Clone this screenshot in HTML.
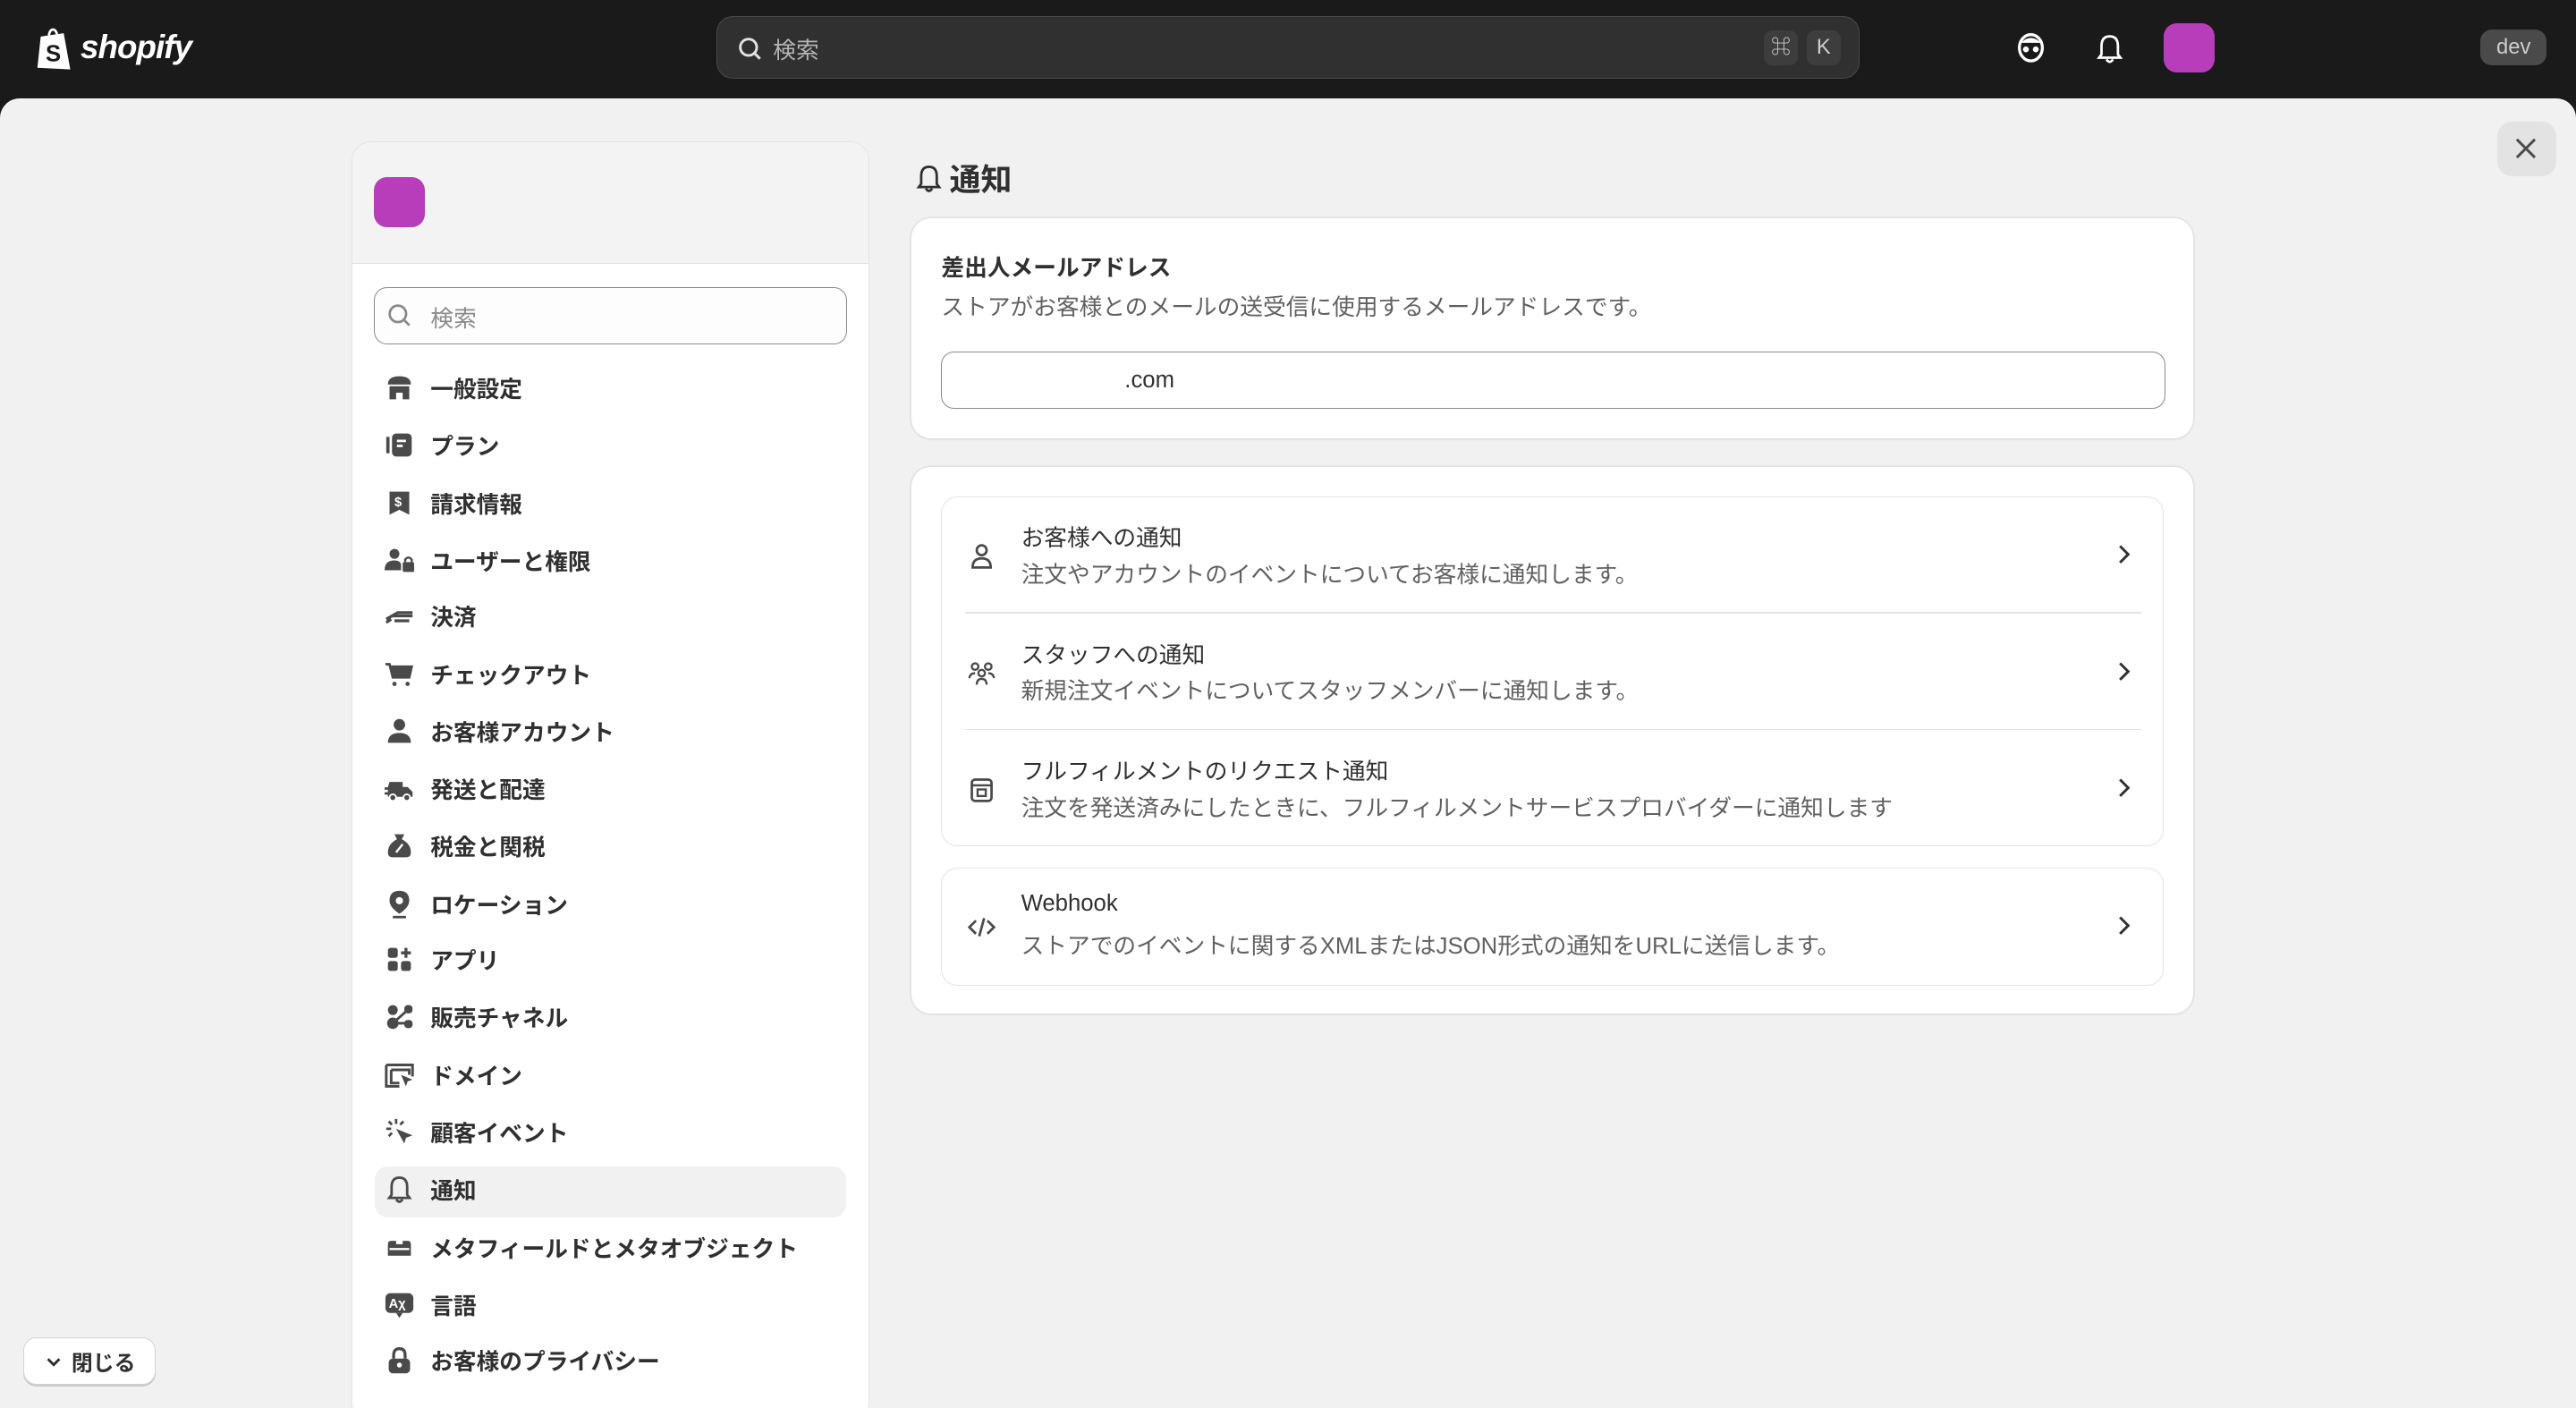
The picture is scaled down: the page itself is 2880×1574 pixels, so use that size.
<!DOCTYPE html>
<html><head><meta charset="utf-8">
<style>
html{zoom:1.83673;height:857px;overflow:hidden}
*{box-sizing:border-box;margin:0;padding:0}
body{width:1568px;height:857px;overflow:hidden;background:#1a1a1a;font-family:"Liberation Sans","Noto Sans CJK JP",sans-serif;color:#303030;position:relative}
.abs{position:absolute}
.main{position:absolute;left:0;top:60px;width:1568px;height:797px;background:#f1f1f1;border-radius:12px 12px 0 0}
.side{position:absolute;left:214px;top:86px;width:315px;height:780px;background:#fff;border:1px solid #e3e3e3;border-radius:12px;overflow:hidden}
.side .hd{height:74px;background:#f3f3f3;border-bottom:1px solid #e3e3e3}
.nav{position:absolute;left:13px;width:287px;height:30px;display:flex;align-items:center;font-size:14px;font-weight:bold;color:#303030}
.nav svg{width:18px;height:18px;margin-left:6px;margin-right:10px}
.card{position:absolute;left:555px;width:780px;background:#fff;border-radius:12px;box-shadow:0 0 0 1px #e3e3e3,0 1px 1px rgba(0,0,0,.06)}
.box{position:absolute;left:18px;width:744px;border:1px solid #e3e3e3;border-radius:10px}
.row{position:absolute;left:0;width:742px;height:71px}
.row .t{position:absolute;left:48px;top:14px;font-size:14px;color:#303030}
.row .d{position:absolute;left:48px;top:36px;font-size:14px;color:#616161}
.row svg.i{position:absolute;left:15px;top:27px;width:18px;height:18px}
.row .c{position:absolute;left:712px;top:27px;width:14px;height:16px}
.sep{position:absolute;left:14px;width:716px;height:1px;background:#e3e3e3}
</style></head><body>
<!-- header -->
<div class="abs" style="left:22px;top:15px;display:flex;align-items:center;color:#fff">
<svg width="24" height="28" viewBox="0 0 24 28"><path d="M3 7 L17 5 L21 27 L1 26 Z" fill="#fff"/><path d="M8 7 C8 2 12 1 13 6" stroke="#fff" stroke-width="1.5" fill="none"/><text x="6" y="22" font-size="14" font-weight="bold" fill="#1a1a1a" font-family="Liberation Sans">S</text></svg>
<span style="font-size:20px;font-weight:bold;font-style:italic;margin-left:3px;letter-spacing:-0.5px">shopify</span></div>
<div class="abs" style="left:436px;top:10px;width:696px;height:38px;background:#303030;border:1px solid #4a4a4a;border-radius:10px">
<svg class="abs" style="left:12px;top:11px" width="16" height="16" viewBox="0 0 16 16"><circle cx="7" cy="7" r="5" stroke="#e3e3e3" stroke-width="1.6" fill="none"/><path d="M11 11 L14 14" stroke="#e3e3e3" stroke-width="1.6"/></svg>
<span class="abs" style="left:34px;top:9px;font-size:14px;color:#b5b5b5">検索</span>
<span class="abs" style="left:637px;top:8px;width:21px;height:21px;background:#3d3d3d;border-radius:5px;color:#ccc;font-size:12px;text-align:center;line-height:21px">⌘</span>
<span class="abs" style="left:663px;top:8px;width:21px;height:21px;background:#3d3d3d;border-radius:5px;color:#ccc;font-size:13px;text-align:center;line-height:21px">K</span>
</div>
<svg class="abs" style="left:1227px;top:19px" width="18" height="20" viewBox="0 0 18 20"><ellipse cx="9" cy="10" rx="7" ry="8" fill="none" stroke="#fff" stroke-width="1.8"/><path d="M3 7 Q9 1 15 7 Z" fill="#fff"/><circle cx="6" cy="11" r="1.8" fill="#fff"/><circle cx="12" cy="11" r="1.8" fill="#fff"/></svg>
<svg class="abs" style="left:1276px;top:20px" width="16" height="19" viewBox="0 0 16 19"><path d="M3 13 L3 8 Q3 2 8 2 Q13 2 13 8 L13 13 L14.5 15 L1.5 15 Z M6 16 Q8 19 10 16" fill="none" stroke="#fff" stroke-width="1.5"/></svg>
<div class="abs" style="left:1317px;top:14px;width:31px;height:30px;background:#b83dba;border-radius:8px"></div>
<div class="abs" style="left:1510px;top:18px;width:40px;height:22px;background:#4a4a4a;border-radius:7px;color:#ccc;font-size:13px;text-align:center;line-height:22px">dev</div>

<div class="main"></div>
<div class="abs" style="left:1520px;top:74px;width:36px;height:33px;background:#e3e3e3;border-radius:9px"><svg class="abs" style="left:11px;top:10px" width="13" height="13" viewBox="0 0 13 13"><path d="M1 1 L12 12 M12 1 L1 12" stroke="#4a4a4a" stroke-width="1.6"/></svg></div>

<!-- sidebar -->
<div class="side"><div class="hd"><div class="abs" style="left:13px;top:21px;width:31px;height:31px;background:#b83dba;border-radius:8px"></div></div>
<div class="abs" style="left:13px;top:88px;width:288px;height:35px;border:1px solid #8a8a8a;border-radius:8px;background:#fdfdfd">
<svg class="abs" style="left:7px;top:9px" width="16" height="16" viewBox="0 0 16 16"><circle cx="7" cy="7" r="5" stroke="#8a8a8a" stroke-width="1.5" fill="none"/><path d="M11 11 L14 14" stroke="#8a8a8a" stroke-width="1.5"/></svg>
<span class="abs" style="left:34px;top:8px;font-size:14px;color:#8a8a8a">検索</span></div>
</div>
<div class="abs" style="left:228px;top:710px;width:287px;height:31px;background:#f1f1f1;border-radius:8px"></div>

<!-- content -->
<div class="abs" style="left:557px;top:95px;display:flex;align-items:center;font-size:19px;font-weight:bold;color:#303030">
<svg width="17" height="18" viewBox="0 0 16 19" style="margin-right:4px"><path d="M3 13 L3 8 Q3 2 8 2 Q13 2 13 8 L13 13 L14.5 15 L1.5 15 Z M6 16 Q8 19 10 16" fill="none" stroke="#303030" stroke-width="1.6"/></svg>通知</div>

<div class="card" style="top:133px;height:134px">
<div class="abs" style="left:18px;top:19px;font-size:14px;font-weight:bold">差出人メールアドレス</div>
<div class="abs" style="left:18px;top:43px;font-size:14px;color:#616161">ストアがお客様とのメールの送受信に使用するメールアドレスです。</div>
<div class="abs" style="left:18px;top:81px;width:745px;height:35px;border:1px solid #8a8a8a;border-radius:8px"><span class="abs" style="left:111px;top:9px;font-size:14px">.com</span></div>
</div>

<div class="card" style="top:284px;height:333px">
<div class="box" style="top:18px;height:213px">
<div class="row" style="top:0"><svg class="i" viewBox="0 0 18 18"><circle cx="9" cy="5.5" r="3" fill="none" stroke="#4a4a4a" stroke-width="1.5"/><path d="M3.5 16 Q3.5 10.5 9 10.5 Q14.5 10.5 14.5 16 Z" fill="none" stroke="#4a4a4a" stroke-width="1.5"/></svg><div class="t">お客様への通知</div><div class="d">注文やアカウントのイベントについてお客様に通知します。</div><svg class="c" viewBox="0 0 14 16"><path d="M5 3 L10 8 L5 13" fill="none" stroke="#303030" stroke-width="1.6"/></svg></div>
<div class="sep" style="top:70px"></div>
<div class="row" style="top:71px"><svg class="i" viewBox="0 0 18 18"><circle cx="5" cy="5" r="2" fill="none" stroke="#4a4a4a" stroke-width="1.3"/><circle cx="13" cy="5" r="2" fill="none" stroke="#4a4a4a" stroke-width="1.3"/><circle cx="9" cy="9" r="2" fill="none" stroke="#4a4a4a" stroke-width="1.3"/><path d="M1.5 12 Q2 9 5 9 M16.5 12 Q16 9 13 9 M6 16 Q6 12.5 9 12.5 Q12 12.5 12 16" fill="none" stroke="#4a4a4a" stroke-width="1.3"/></svg><div class="t">スタッフへの通知</div><div class="d">新規注文イベントについてスタッフメンバーに通知します。</div><svg class="c" viewBox="0 0 14 16"><path d="M5 3 L10 8 L5 13" fill="none" stroke="#303030" stroke-width="1.6"/></svg></div>
<div class="sep" style="top:141px"></div>
<div class="row" style="top:142px"><svg class="i" viewBox="0 0 18 18"><rect x="3" y="3" width="12" height="13" rx="2" fill="none" stroke="#4a4a4a" stroke-width="1.5"/><path d="M3 6.5 H15" stroke="#4a4a4a" stroke-width="1.3"/><rect x="6.5" y="9" width="5" height="4" fill="none" stroke="#4a4a4a" stroke-width="1.3"/></svg><div class="t">フルフィルメントのリクエスト通知</div><div class="d">注文を発送済みにしたときに、フルフィルメントサービスプロバイダーに通知します</div><svg class="c" viewBox="0 0 14 16"><path d="M5 3 L10 8 L5 13" fill="none" stroke="#303030" stroke-width="1.6"/></svg></div>
</div>
<div class="box" style="top:244px;height:72px">
<div class="row" style="top:0"><svg class="i" viewBox="0 0 18 18"><path d="M5.5 5 L1.5 9 L5.5 13 M12.5 5 L16.5 9 L12.5 13 M10.5 3.5 L7.5 14.5" fill="none" stroke="#4a4a4a" stroke-width="1.5"/></svg><div class="t">Webhook</div><div class="d">ストアでのイベントに関するXMLまたはJSON形式の通知をURLに送信します。</div><svg class="c" viewBox="0 0 14 16"><path d="M5 3 L10 8 L5 13" fill="none" stroke="#303030" stroke-width="1.6"/></svg></div>
</div>
</div>

<div class="abs" style="left:14px;top:814px;width:81px;height:29px;background:#fff;border:1px solid #d4d4d4;border-radius:8px;box-shadow:0 1px 0 #c8c8c8;font-size:13px;font-weight:bold;display:flex;align-items:center;justify-content:center">
<svg width="12" height="12" viewBox="0 0 12 12" style="margin-right:5px"><path d="M2.5 4.5 L6 8 L9.5 4.5" fill="none" stroke="#303030" stroke-width="1.6"/></svg>閉じる</div>

<!-- nav items -->
<div class="nav" style="left:228px;top:221px"><svg viewBox="0 0 18 18"><path d="M2 7 Q2 2 9 2 Q16 2 16 7 Z M3 8 H15 V16 H11 V12 H7 V16 H3 Z" fill="#4a4a4a"/></svg>一般設定</div>
<div class="nav" style="left:228px;top:256px"><svg viewBox="0 0 18 18"><rect x="1" y="4" width="2" height="10" fill="#4a4a4a"/><rect x="4.5" y="2" width="12" height="14" rx="2.5" fill="#4a4a4a"/><path d="M7.5 6.5 H13 M7.5 9.5 H11" stroke="#fff" stroke-width="1.5"/></svg>プラン</div>
<div class="nav" style="left:228px;top:291px"><svg viewBox="0 0 18 18"><path d="M3 2 H15 V16 L9 13 L3 16 Z" fill="#4a4a4a"/><text x="6" y="11" font-size="8" fill="#fff" font-weight="bold">$</text></svg>請求情報</div>
<div class="nav" style="left:228px;top:326px"><svg viewBox="0 0 18 18"><circle cx="6" cy="5" r="3" fill="#4a4a4a"/><path d="M0 15 Q0 9 6 9 Q9 9 10 11 V15 Z" fill="#4a4a4a"/><rect x="11" y="10" width="7" height="6" rx="1" fill="#4a4a4a"/><path d="M12.5 10 V8.5 Q14.5 6 16.5 8.5 V10" fill="none" stroke="#4a4a4a" stroke-width="1.3"/></svg>ユーザーと権限</div>
<div class="nav" style="left:228px;top:360px"><svg viewBox="0 0 18 18"><path d="M1 11 L8 7 H17 M4 9 H17 M6 12 H15 M1 13 L4 11" fill="none" stroke="#4a4a4a" stroke-width="1.8"/></svg>決済</div>
<div class="nav" style="left:228px;top:395px"><svg viewBox="0 0 18 18"><path d="M0.5 3 H3 L5 11 H15 L16.5 4.5 H3.5" fill="#4a4a4a" stroke="#4a4a4a" stroke-width="1.5"/><circle cx="6" cy="15" r="1.3" fill="#4a4a4a"/><circle cx="14" cy="15" r="1.3" fill="#4a4a4a"/></svg>チェックアウト</div>
<div class="nav" style="left:228px;top:430px"><svg viewBox="0 0 18 18"><circle cx="9" cy="5" r="3.5" fill="#4a4a4a"/><path d="M2 16 Q2 10 9 10 Q16 10 16 16 Z" fill="#4a4a4a"/></svg>お客様アカウント</div>
<div class="nav" style="left:228px;top:465px"><svg viewBox="0 0 18 18"><path d="M3 5 H11 V8 H14 L17 11 V14 H2 V8" fill="#4a4a4a"/><path d="M0 9 H6 M0 12 H5" stroke="#4a4a4a" stroke-width="1.5"/><circle cx="5" cy="14.5" r="2" fill="#4a4a4a" stroke="#fff"/><circle cx="13.5" cy="14.5" r="2" fill="#4a4a4a" stroke="#fff"/></svg>発送と配達</div>
<div class="nav" style="left:228px;top:500px"><svg viewBox="0 0 18 18"><path d="M6 2 H12 L10.5 5 Q16 8 16 13 Q16 16 13 16 H5 Q2 16 2 13 Q2 8 7.5 5 Z" fill="#4a4a4a"/><path d="M7 13 L11 8" stroke="#fff" stroke-width="1.3"/></svg>税金と関税</div>
<div class="nav" style="left:228px;top:535px"><svg viewBox="0 0 18 18"><path d="M9 1 Q15 1 15 7 Q15 11 9 15 Q3 11 3 7 Q3 1 9 1 Z" fill="#4a4a4a"/><circle cx="9" cy="7" r="2.2" fill="#fff"/><path d="M5 17 H13" stroke="#4a4a4a" stroke-width="1.5"/></svg>ロケーション</div>
<div class="nav" style="left:228px;top:569px"><svg viewBox="0 0 18 18"><rect x="2" y="2" width="6" height="6" rx="1.5" fill="#4a4a4a"/><rect x="2" y="10" width="6" height="6" rx="1.5" fill="#4a4a4a"/><rect x="10" y="10" width="6" height="6" rx="1.5" fill="#4a4a4a"/><path d="M13 2 V8 M10 5 H16" stroke="#4a4a4a" stroke-width="1.8"/></svg>アプリ</div>
<div class="nav" style="left:228px;top:604px"><svg viewBox="0 0 18 18"><circle cx="5" cy="5" r="3" fill="#4a4a4a"/><circle cx="5" cy="13" r="3.5" fill="#4a4a4a"/><rect x="12" y="2" width="5" height="5" rx="2" fill="#4a4a4a"/><rect x="12" y="11" width="5" height="5" rx="2" fill="#4a4a4a"/><path d="M5 13 L14 5 M5 13 H14" stroke="#4a4a4a" stroke-width="1.6"/></svg>販売チャネル</div>
<div class="nav" style="left:228px;top:639px"><svg viewBox="0 0 18 18"><path d="M1 3 H17 V10 M1 3 V16 H9 M4 6 H15 V9 M4 6 V14 H9" fill="none" stroke="#4a4a4a" stroke-width="1.6"/><path d="M10 9 L17 12 L14 13 L13 16 Z" fill="#4a4a4a"/></svg>ドメイン</div>
<div class="nav" style="left:228px;top:674px"><svg viewBox="0 0 18 18"><path d="M7 7 L17 11 L13 12.5 L12 16 Z" fill="#4a4a4a"/><path d="M7 1 V4 M1 7 H4 M2.5 2.5 L4.5 4.5 M2.5 11.5 L4.5 9.5 M11.5 2.5 L9.5 4.5" stroke="#4a4a4a" stroke-width="1.5"/></svg>顧客イベント</div>
<div class="nav" style="left:228px;top:709px"><svg viewBox="0 0 16 19"><path d="M3 13 L3 8 Q3 2 8 2 Q13 2 13 8 L13 13 L14.5 15 L1.5 15 Z M6 16 Q8 19 10 16" fill="none" stroke="#4a4a4a" stroke-width="1.6"/></svg>通知</div>
<div class="nav" style="left:228px;top:744px"><svg viewBox="0 0 18 18"><path d="M2 7 Q2 5 4 5 H7 V7 H11 V5 H14 Q16 5 16 7 V14 H2 Z" fill="#4a4a4a"/><path d="M3 10 H15" stroke="#fff" stroke-width="1.3"/></svg>メタフィールドとメタオブジェクト</div>
<div class="nav" style="left:228px;top:779px"><svg viewBox="0 0 18 18"><rect x="0.5" y="2" width="17" height="12" rx="3" fill="#4a4a4a"/><path d="M7 14 L9 17 L11 14" fill="#4a4a4a"/><text x="2.5" y="11" font-size="8" fill="#fff" font-weight="bold">Aχ</text></svg>言語</div>
<div class="nav" style="left:228px;top:813px"><svg viewBox="0 0 18 18"><rect x="2.5" y="8" width="13" height="9" rx="2.5" fill="#4a4a4a"/><path d="M5.5 8 V6 Q5.5 2 9 2 Q12.5 2 12.5 6 V8" fill="none" stroke="#4a4a4a" stroke-width="1.8"/><circle cx="9" cy="12" r="1.5" fill="#fff"/></svg>お客様のプライバシー</div>
</body></html>
